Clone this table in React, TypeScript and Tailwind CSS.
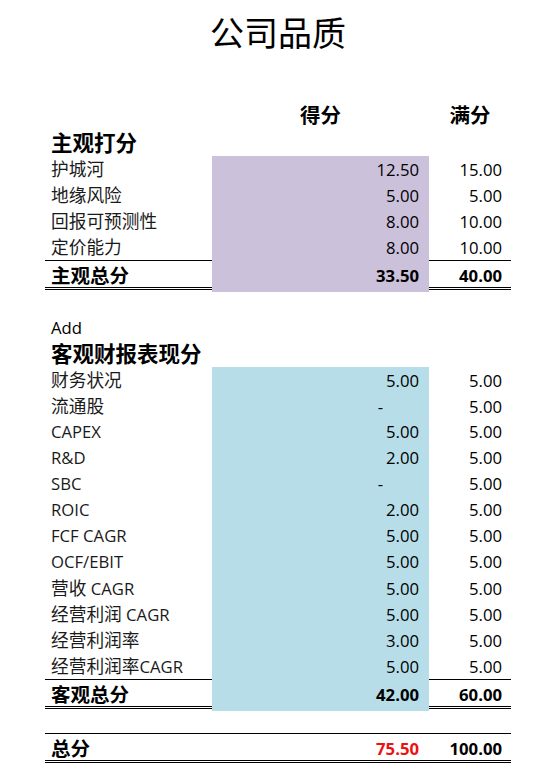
import React from "react";

const NUM = { fontFamily: '"Open Sans", "Noto Sans CJK SC", sans-serif' };
const CJK = { fontFamily: '"Open Sans", "Noto Sans CJK SC", sans-serif' };

function Label({ text, bold }: { text: string; bold?: boolean }) {
  const parts = text.split(/([\u4e00-\u9fff]+)/).filter((p) => p.length > 0);
  return (
    <span style={CJK} className={bold ? "font-bold text-black" : "text-[#1a1a1a]"}>
      {parts.map((p, i) =>
        /[\u4e00-\u9fff]/.test(p) ? (
          <span key={i} className={bold ? "text-[19.5px]" : "text-[17.7px]"}>
            {p}
          </span>
        ) : (
          <span key={i} className="text-[16.7px]">
            {p}
          </span>
        )
      )}
    </span>
  );
}

type RowProps = {
  label: string;
  score?: string;
  full?: string;
  bg?: string;
  dash?: boolean;
};

function Row({ label, score, full, bg, dash }: RowProps) {
  return (
    <div className="grid grid-cols-[167px_217px_82px] h-[26px]">
      <div className="flex items-center pl-[6px] whitespace-nowrap">
        <Label text={label} />
      </div>
      <div className={`flex items-center justify-end ${dash ? "pr-[46px]" : "pr-[10px]"} ${bg ?? ""}`}>
        <span style={NUM} className="text-[16.7px] text-black">{score}</span>
      </div>
      <div className="flex items-center justify-end pr-[9px]">
        <span style={NUM} className="text-[16.7px] text-black">{full}</span>
      </div>
    </div>
  );
}

function TotalRow({ label, score, full, bg, red }: { label: string; score: string; full: string; bg?: string; red?: boolean }) {
  return (
    <div className="grid grid-cols-[167px_217px_82px] h-[30px] border-t border-black border-b-[3px] border-double">
      <div className="flex items-center pl-[6px] pb-[2px]">
        <Label text={label} bold />
      </div>
      <div className={`flex items-center justify-end pr-[10px] pb-[2px] ${bg ?? ""}`}>
        <span style={NUM} className={`text-[16.7px] font-bold ${red ? "text-[#ee1111]" : "text-black"}`}>{score}</span>
      </div>
      <div className="flex items-center justify-end pr-[9px] pb-[2px]">
        <span style={NUM} className="text-[16.7px] font-bold text-black">{full}</span>
      </div>
    </div>
  );
}

function Heading({ label }: { label: string }) {
  return (
    <div className="h-[26px] flex items-center pl-[6px]">
      <span style={CJK} className="text-[21.5px] font-bold text-black leading-none">{label}</span>
    </div>
  );
}

export default function App() {
  const purple = "bg-[#cbc1db]";
  const teal = "bg-[#b7dee8]";
  return (
    <div className="w-[545px] h-[781px] bg-white">
      <div className="ml-[45px] w-[466px]">
        <div className="h-[66px] flex items-center justify-center">
          <span style={CJK} className="text-[34px] font-normal text-black leading-none">公司品质</span>
        </div>
        <div className="h-[38px]" />
        <div className="grid grid-cols-[167px_217px_82px] h-[26px]">
          <div />
          <div className="flex items-center justify-center pb-[3px]">
            <span style={CJK} className="text-[20.5px] font-bold text-black leading-none">得分</span>
          </div>
          <div className="flex items-center justify-center pb-[3px]">
            <span style={CJK} className="text-[20.5px] font-bold text-black leading-none">满分</span>
          </div>
        </div>
        <Heading label="主观打分" />
        <Row label="护城河" score="12.50" full="15.00" bg={purple} />
        <Row label="地缘风险" score="5.00" full="5.00" bg={purple} />
        <Row label="回报可预测性" score="8.00" full="10.00" bg={purple} />
        <Row label="定价能力" score="8.00" full="10.00" bg={purple} />
        <TotalRow label="主观总分" score="33.50" full="40.00" bg={purple} />

        <div className="h-[25px]" />
        <div className="h-[26px] flex items-center pl-[6px]">
          <span style={NUM} className="text-[16.7px] text-black">Add</span>
        </div>
        <Heading label="客观财报表现分" />
        <Row label="财务状况" score="5.00" full="5.00" bg={teal} />
        <Row label="流通股" score="-" full="5.00" bg={teal} dash />
        <Row label="CAPEX" score="5.00" full="5.00" bg={teal} />
        <Row label="R&D" score="2.00" full="5.00" bg={teal} />
        <Row label="SBC" score="-" full="5.00" bg={teal} dash />
        <Row label="ROIC" score="2.00" full="5.00" bg={teal} />
        <Row label="FCF CAGR" score="5.00" full="5.00" bg={teal} />
        <Row label="OCF/EBIT" score="5.00" full="5.00" bg={teal} />
        <Row label="营收 CAGR" score="5.00" full="5.00" bg={teal} />
        <Row label="经营利润 CAGR" score="5.00" full="5.00" bg={teal} />
        <Row label="经营利润率" score="3.00" full="5.00" bg={teal} />
        <Row label="经营利润率CAGR" score="5.00" full="5.00" bg={teal} />
        <TotalRow label="客观总分" score="42.00" full="60.00" bg={teal} />

        <div className="h-[24px]" />
        <TotalRow label="总分" score="75.50" full="100.00" red />
      </div>
    </div>
  );
}
